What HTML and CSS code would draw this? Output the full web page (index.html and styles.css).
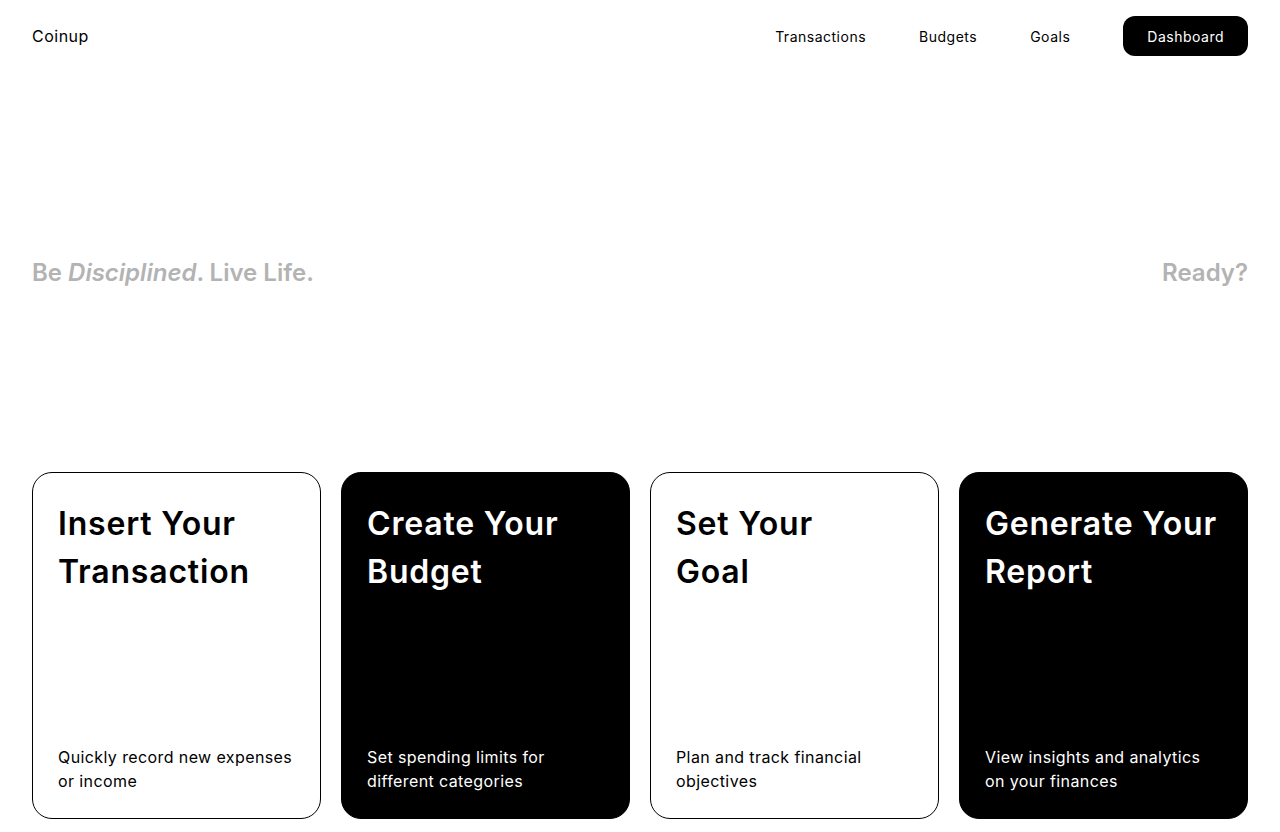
FILE: index.html
```html
<!DOCTYPE html>
<html lang="en">
<head>
<meta charset="utf-8">
<title>Coinup</title>
<link rel="stylesheet" href="styles.css">
</head>
<body>
<header class="topbar">
  <div class="brand">Coinup</div>
  <nav class="nav">
    <a class="nav-link" href="#">Transactions</a>
    <a class="nav-link" href="#">Budgets</a>
    <a class="nav-link" href="#">Goals</a>
    <a class="nav-btn" href="#">Dashboard</a>
  </nav>
</header>
<section class="hero">
  <p class="tagline">Be <em>Disciplined</em>. Live Life.</p>
  <p class="tagline">Ready?</p>
</section>
<section class="cards">
  <article class="card light">
    <h2 class="card-title">Insert Your<br>Transaction</h2>
    <p class="card-text">Quickly record new expenses or income</p>
  </article>
  <article class="card dark">
    <h2 class="card-title">Create Your<br>Budget</h2>
    <p class="card-text">Set spending limits for different categories</p>
  </article>
  <article class="card light">
    <h2 class="card-title">Set Your<br>Goal</h2>
    <p class="card-text">Plan and track financial objectives</p>
  </article>
  <article class="card dark">
    <h2 class="card-title">Generate Your<br>Report</h2>
    <p class="card-text">View insights and analytics on your finances</p>
  </article>
</section>
</body>
</html>
```
FILE: styles.css
```css
* { box-sizing: border-box; }
html, body { margin: 0; padding: 0; background: #fff; }
body {
  font-family: "Inter", "Open Sans", sans-serif;
  color: #000;
  padding: 0 32px;
}
.topbar {
  height: 72px;
  display: flex;
  align-items: center;
  justify-content: space-between;
}
.brand { font-size: 16px; letter-spacing: 0.5px; }
.nav { display: flex; align-items: center; gap: 53px; }
.nav-link { color: #000; text-decoration: none; font-size: 14px; letter-spacing: 0.5px; }
.nav-btn {
  background: #000;
  color: #fff;
  text-decoration: none;
  font-size: 14px;
  letter-spacing: 0.5px;
  height: 40px;
  padding: 0 24px;
  border-radius: 12px;
  display: flex;
  align-items: center;
}
.hero {
  height: 400px;
  display: flex;
  align-items: center;
  justify-content: space-between;
}
.tagline {
  margin: 0;
  font-size: 24px;
  font-weight: 600;
  color: #b3b3b3;
}
.tagline em { font-style: italic; }
.cards {
  display: grid;
  grid-template-columns: repeat(4, 1fr);
  gap: 20px;
}
.card {
  height: 347px;
  border-radius: 20px;
  border: 1px solid #000;
  padding: 27px 25px 25px;
  display: flex;
  flex-direction: column;
  justify-content: space-between;
}
.card.dark { background: #000; color: #fff; }
.card-title {
  margin: 0;
  font-size: 32px;
  font-weight: 600;
  line-height: 48px;
  letter-spacing: 0.8px;
}
.card-text {
  margin: 0;
  font-size: 16px;
  line-height: 24px;
  letter-spacing: 0.4px;
}
```
